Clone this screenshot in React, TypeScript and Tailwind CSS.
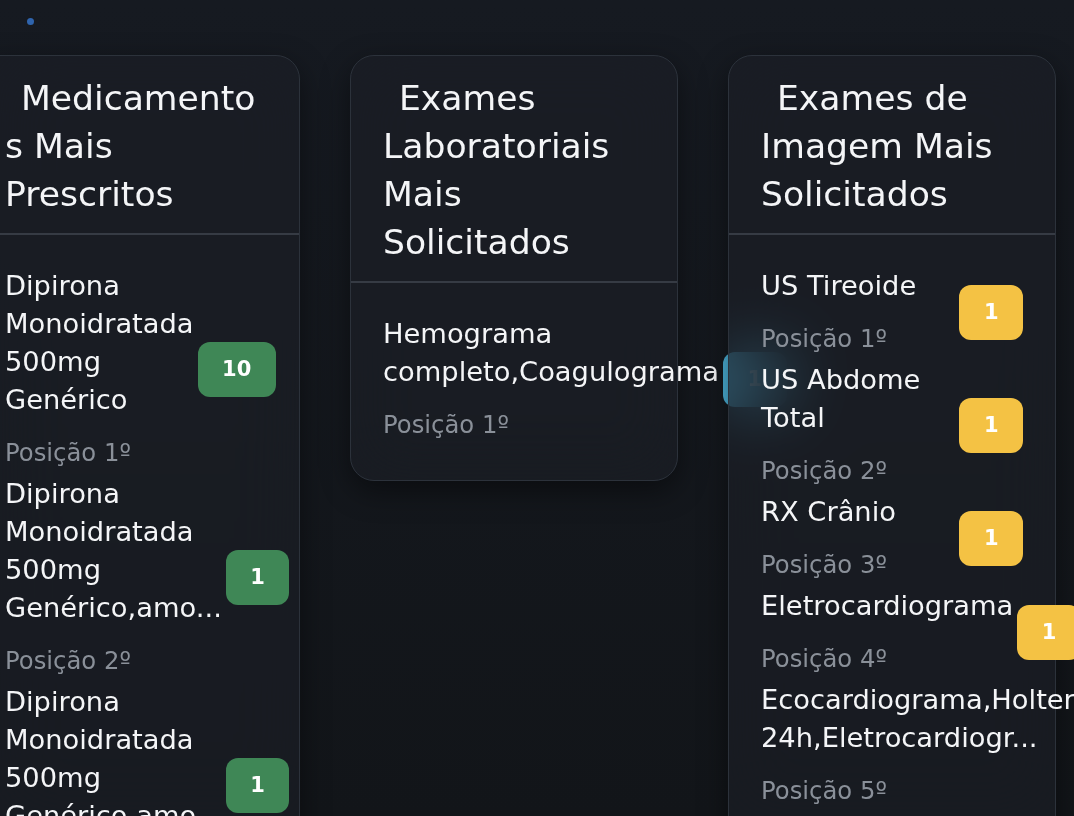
const medicamentos = [
  { nome: "Dipirona Monoidratada 500mg Genérico", qtd: 10 },
  { nome: "Dipirona Monoidratada 500mg Genérico,amoxicilina 500mg", qtd: 1 },
  { nome: "Dipirona Monoidratada 500mg Genérico,amoxicilina 875mg", qtd: 1 },
];

const laboratoriais = [{ nome: "Hemograma completo,Coagulograma", qtd: 1 }];

const imagem = [
  { nome: "US Tireoide", qtd: 1 },
  { nome: "US Abdome Total", qtd: 1 },
  { nome: "RX Crânio", qtd: 1 },
  { nome: "Eletrocardiograma", qtd: 1 },
  { nome: "Ecocardiograma,Holter 24h,Eletrocardiograma de esforço", qtd: 1 },
];

function truncar(texto: string) {
  return texto.length > 40 ? texto.slice(0, 40) + "..." : texto;
}

type Item = { nome: string; qtd: number };

function Card({ titulo, itens, badge }: { titulo: string; itens: Item[]; badge: string }) {
  return (
    <section className="w-[328px] shrink-0 self-start rounded-[24px] border border-[#2c323b] bg-[#1b1f26]/65 backdrop-blur-[32px] shadow-[0_10px_30px_rgba(0,0,0,0.45)]">
      <header className="px-[32px] pt-[18px] pb-[15px] border-b-2 border-[#363b44]">
        <h2 className="text-[34.6px] leading-[48px] text-[#f4f5f7] indent-[16px] break-words">{titulo}</h2>
      </header>
      <div className="px-[32px] pt-[32px] pb-[36px] flex flex-col gap-[3px]">
        {itens.map((item, i) => (
          <div key={i} className="flex items-center gap-1">
            <div className="flex-1">
              <p className="text-[27.3px] leading-[38px] text-[#f4f5f7]">{truncar(item.nome)}</p>
              <p className="mt-[15px] text-[24.3px] leading-[38px] text-[#8a9099]">Posição {i + 1}º</p>
            </div>
            <span className={`shrink-0 rounded-[12px] px-[24.5px] py-[14px] text-[21px] leading-[27px] font-bold text-white ${badge}`}>
              {item.qtd}
            </span>
          </div>
        ))}
      </div>
    </section>
  );
}

export default function App() {
  return (
    <main
      className="h-screen overflow-hidden bg-gradient-to-b from-[#161a21] to-[#121519]"
      style={{ fontFamily: '"DejaVu Sans", sans-serif' }}
    >
      <div className="pt-[18px] pl-[27px]">
        <div className="w-[7px] h-[7px] rounded-full bg-[#2f64ad]"></div>
      </div>
      <div className="mt-[30px] -ml-[28px] flex gap-[50px]">
        <Card titulo="Medicamentos Mais Prescritos" itens={medicamentos} badge="bg-[#3f8756]" />
        <Card titulo="Exames Laboratoriais Mais Solicitados" itens={laboratoriais} badge="bg-[#4cb2da]" />
        <Card titulo="Exames de Imagem Mais Solicitados" itens={imagem} badge="bg-[#f4c244]" />
      </div>
    </main>
  );
}
